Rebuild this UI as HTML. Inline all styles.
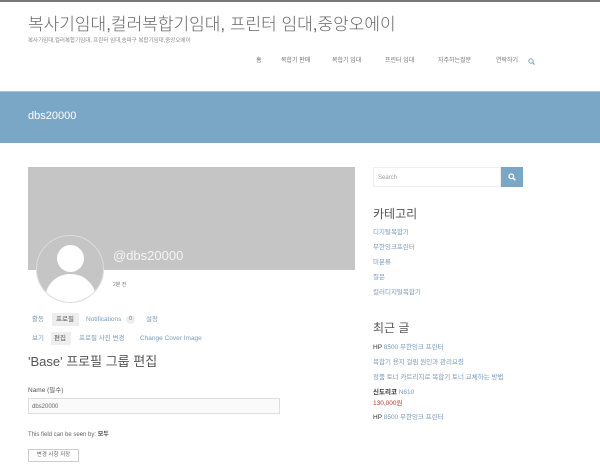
<!DOCTYPE html>
<html><head><meta charset="utf-8"><style>
*{margin:0;padding:0;box-sizing:border-box}
body{width:600px;height:476px;overflow:hidden;background:#fff;font-family:"Liberation Sans","Noto Sans CJK KR",sans-serif;position:relative;color:#555}
.a{position:absolute;white-space:nowrap;line-height:1}
.lk{color:#7a9bb8}
</style></head><body>
<div class="a" style="left:0;top:0;width:600px;height:2px;background:#777"></div>
<div class="a" style="left:28px;top:16px;font-size:17px;color:#666;font-weight:300">복사기임대,컬러복합기임대, 프린터 임대,중앙오에이</div>
<div class="a" style="left:28px;top:39px;font-size:5.5px;color:#888">복사기임대,컬러복합기임대, 프린터 임대,송파구 복합기임대,중앙오에이</div>
<div class="a" style="left:256px;top:58px;font-size:6px;color:#777">
<span style="position:absolute;left:0">홈</span><span style="position:absolute;left:25px">복합기 판매</span><span style="position:absolute;left:76px">복합기 임대</span><span style="position:absolute;left:129px">프린터 임대</span><span style="position:absolute;left:182px">자주하는질문</span><span style="position:absolute;left:240px">연락하기</span>
<svg style="position:absolute;left:272px;top:0" width="7" height="7" viewBox="0 0 7 7"><circle cx="3" cy="3" r="2.2" fill="none" stroke="#7ba7c7" stroke-width="1"/><path d="M4.6 4.6L6.5 6.5" stroke="#7ba7c7" stroke-width="1.2"/></svg></div>
<div class="a" style="left:0;top:91px;width:600px;height:52px;background:#7ba7c7;border-top:1px solid #a9c6dc"></div>
<div class="a" style="left:28px;top:111px;font-size:11px;color:#fff">dbs20000</div>

<div class="a" style="left:28px;top:167px;width:327px;height:103px;background:#c5c5c5"></div>
<div class="a" style="left:36px;top:235px;width:68px;height:68px;border-radius:50%;background:#c5c5c5;border:1px solid #ddd;overflow:hidden">
<div style="position:absolute;left:20px;top:9px;width:27px;height:27px;border-radius:50%;background:#fff"></div>
<div style="position:absolute;left:8px;top:38px;width:51px;height:40px;border-radius:25px 25px 0 0;background:#fff"></div></div>
<div class="a" style="left:113px;top:249px;font-size:13px;color:#f4f4f4">@dbs20000</div>
<div class="a" style="left:113px;top:283px;font-size:5px;color:#777">2분 전</div>

<div class="a" style="left:32px;top:317px;font-size:6.5px;color:#7a9bb8">활동</div>
<div class="a" style="left:52px;top:313px;width:27px;height:13px;background:#eee"></div>
<div class="a" style="left:56px;top:317px;font-size:6.5px;color:#555">프로필</div>
<div class="a lk" style="left:86px;top:317px;font-size:6.5px">Notifications</div>
<div class="a" style="left:126px;top:315px;width:9px;height:9px;border-radius:50%;background:#eee;font-size:5.5px;text-align:center;line-height:9px;color:#777">0</div>
<div class="a lk" style="left:146px;top:317px;font-size:6.5px">설정</div>
<div class="a lk" style="left:32px;top:336px;font-size:6.5px">보기</div>
<div class="a" style="left:51px;top:332px;width:20px;height:13px;background:#eee"></div>
<div class="a" style="left:54px;top:336px;font-size:6.5px;color:#555">편집</div>
<div class="a lk" style="left:79px;top:336px;font-size:6.5px">프로필 사진 변경</div>
<div class="a lk" style="left:140px;top:336px;font-size:6.5px">Change Cover Image</div>
<div class="a" style="left:28px;top:355px;font-size:13px;color:#555">'Base' 프로필 그룹 편집</div>
<div class="a" style="left:28px;top:388px;font-size:6.5px;color:#555">Name (필수)</div>
<div class="a" style="left:28px;top:398px;width:252px;height:16px;border:1px solid #ddd;background:#fafafa;font-size:6px;padding:5px 3px;color:#666">dbs20000</div>
<div class="a" style="left:28px;top:432px;font-size:6px;color:#666">This field can be seen by: <b style="color:#444">모두</b></div>
<div class="a" style="left:28px;top:449px;width:51px;height:13px;border:1px solid #ccc;font-size:5.5px;line-height:11px;text-align:center;color:#666">변경 사항 저장</div>

<div class="a" style="left:373px;top:167px;width:128px;height:20px;border:1px solid #eee;font-size:6px;color:#999;padding:7px 4px">Search</div>
<div class="a" style="left:501px;top:167px;width:22px;height:20px;background:#7ba7c7"></div>
<svg class="a" style="left:508px;top:173px" width="8" height="8" viewBox="0 0 8 8"><circle cx="3.3" cy="3.3" r="2.3" fill="none" stroke="#fff" stroke-width="1.3"/><path d="M5 5L7.3 7.3" stroke="#fff" stroke-width="1.5"/></svg>
<div class="a" style="left:373px;top:208px;font-size:12px;color:#555">카테고리</div>
<div class="a lk" style="left:373px;top:230px;font-size:6.5px">디지털복합기</div>
<div class="a lk" style="left:373px;top:245px;font-size:6.5px">무한잉크프린터</div>
<div class="a lk" style="left:373px;top:260px;font-size:6.5px">미분류</div>
<div class="a lk" style="left:373px;top:275px;font-size:6.5px">질문</div>
<div class="a lk" style="left:373px;top:290px;font-size:6.5px">컬러디지털복합기</div>
<div class="a" style="left:373px;top:322px;font-size:12px;color:#555">최근 글</div>
<div class="a lk" style="left:373px;top:345px;font-size:6.5px"><span style="color:#333">HP</span> 8500 무한잉크 프린터</div>
<div class="a lk" style="left:373px;top:360px;font-size:6.5px">복합기 용지 걸림 원인과 관리요령</div>
<div class="a lk" style="left:373px;top:375px;font-size:6.5px">정품 토너 카트리지로 복합기 토너 교체하는 방법</div>
<div class="a lk" style="left:373px;top:390px;font-size:6.5px"><b style="color:#333">신도리코</b> N610</div>
<div class="a" style="left:373px;top:401px;font-size:6.5px;color:#c0392b">130,000원</div>
<div class="a lk" style="left:373px;top:415px;font-size:6.5px"><span style="color:#333">HP</span> 8500 무한잉크 프린터</div>
</body></html>
